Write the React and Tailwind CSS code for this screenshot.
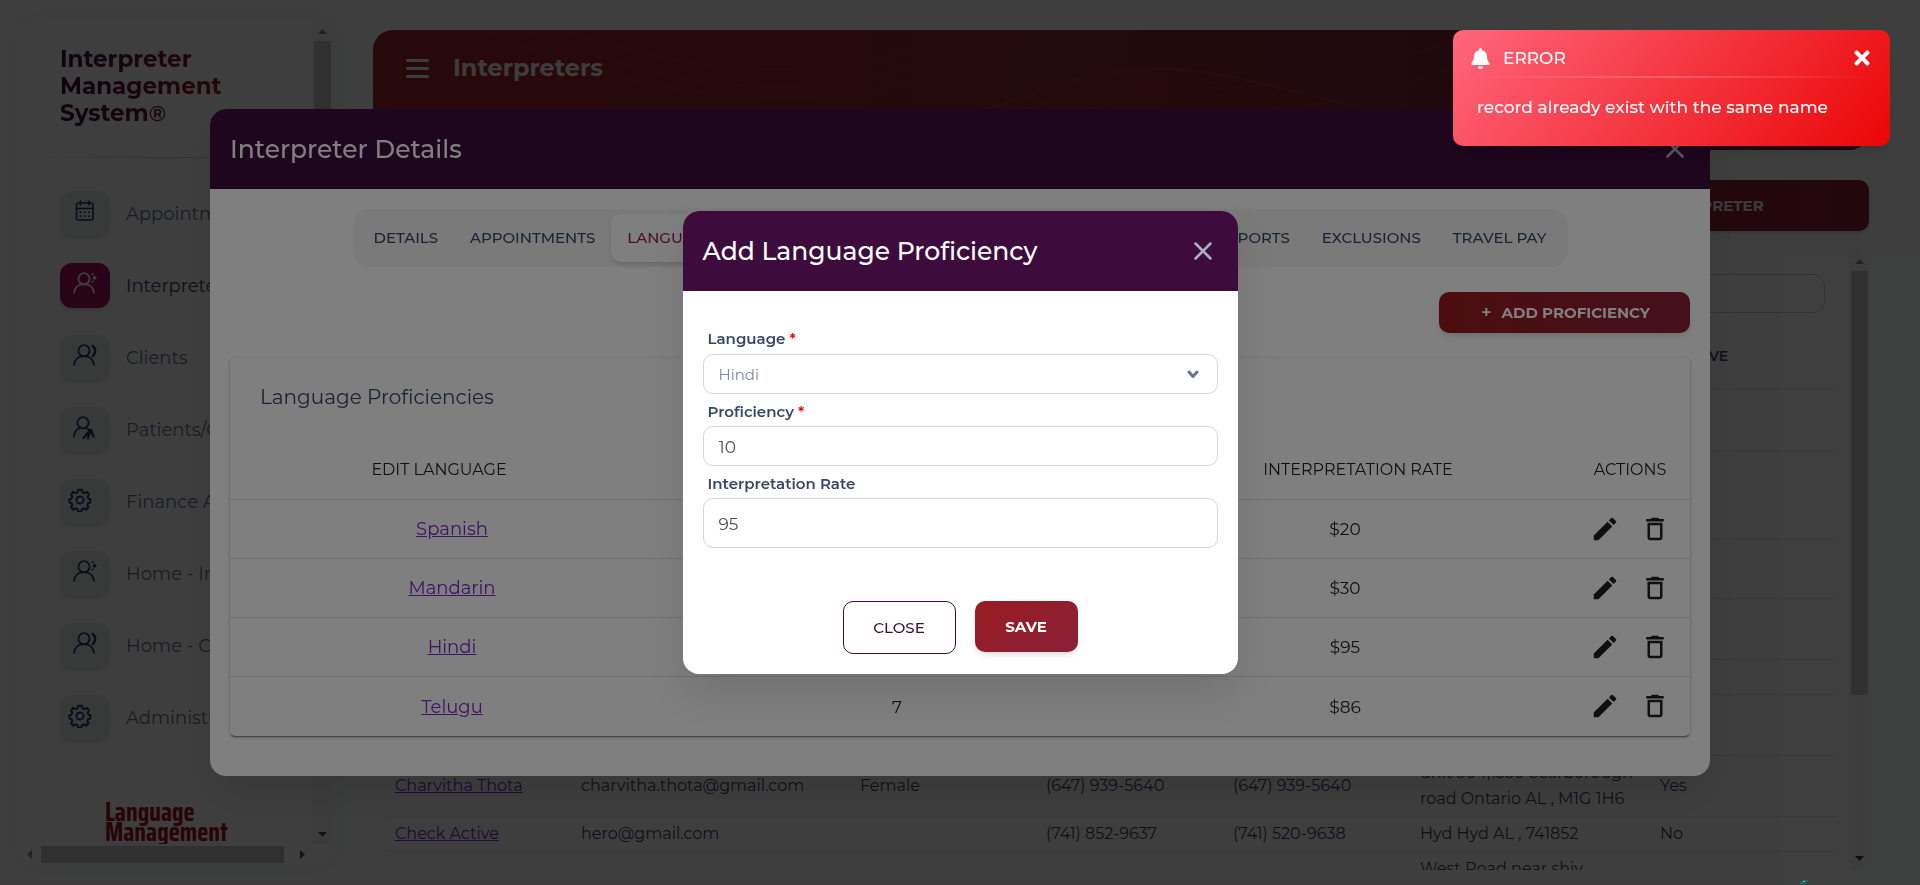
import React from "react";
import { FaBell, FaTimes } from "react-icons/fa";
import { MdEdit, MdDeleteOutline } from "react-icons/md";

function CalendarIcon() {
  return (
    <svg width="20" height="22" viewBox="0 0 20 22" fill="none" stroke="currentColor" strokeWidth="1.6" strokeLinecap="round">
      <rect x="1.5" y="3" width="16.5" height="17" rx="2" />
      <path d="M1.5 8.5H18M5.5 1v4M14 1v4" />
      <path d="M5.5 12.2h.2M9.7 12.2h.2M13.9 12.2h.2M5.5 16.2h.2M9.7 16.2h.2M13.9 16.2h.2" strokeWidth="1.8" />
    </svg>
  );
}

function InterpreterIcon() {
  return (
    <svg width="24" height="22" viewBox="0 0 24 22" fill="none" stroke="currentColor" strokeWidth="1.8" strokeLinecap="round">
      <circle cx="11" cy="6.8" r="5.6" />
      <path d="M1 20.8c.5-5.4 4.6-8.6 10-8.6s9.5 3.2 10 8.6" />
      <circle cx="19.6" cy="2.2" r=".5" fill="currentColor" strokeWidth="1.2" />
      <circle cx="21.6" cy="5.8" r="1.3" fill="currentColor" strokeWidth="1.2" />
      <circle cx="19.6" cy="9.6" r=".5" fill="currentColor" strokeWidth="1.2" />
    </svg>
  );
}

function ClientsIcon() {
  return (
    <svg width="24" height="22" viewBox="0 0 24 22" fill="none" stroke="currentColor" strokeWidth="1.8" strokeLinecap="round">
      <circle cx="11" cy="6.8" r="5.6" />
      <path d="M1 20.8c.5-5.4 4.6-8.6 10-8.6s9.5 3.2 10 8.6" />
      <path d="M20 2c2.8 2.6 2.8 7 0 9.8" strokeWidth="2.6" />
    </svg>
  );
}

function PatientIcon() {
  return (
    <svg width="24" height="24" viewBox="0 0 24 24" fill="none" stroke="currentColor" strokeWidth="1.8" strokeLinecap="round">
      <circle cx="10" cy="6.8" r="5.6" />
      <path d="M1 20.5c.3-4.5 2.8-7.6 6.4-8.3M12.5 12.2c1.3.3 2.4.9 3.3 1.6" />
      <path d="M17.5 13.5l-7 8.5M17 14l-2 8.5M18 14l2.5 6.5" strokeWidth="2.2" />
      <path d="M17.5 13.5l-4 5.5 3-.5z" fill="currentColor" />
    </svg>
  );
}

function GearIcon() {
  return (
    <svg width="24" height="24" viewBox="0 0 24 24" fill="none" stroke="currentColor" strokeWidth="2" strokeLinejoin="round">
      <circle cx="12" cy="12" r="3.6" />
      <path d="M10 1.8h4l.6 2.6 1.9.8 2.3-1.4 2.2 2.7-1.4 2.2.8 1.9 2 .6v3.2l-2.3.8-.8 1.9 1.3 2.1-2.5 2.5-2.2-1.3-1.9.8-.6 2.3h-3.2l-.7-2.3-1.9-.8-2.2 1.3-2.3-2.5 1.3-2.2-.8-1.8-2.2-.8v-3.2l2.2-.6.8-1.9-1.3-2.2 2.2-2.6 2.3 1.3 1.9-.8z" />
    </svg>
  );
}

const NAV = [
  { label: "Appointments", Icon: CalendarIcon },
  { label: "Interpreters", Icon: InterpreterIcon, active: true },
  { label: "Clients", Icon: ClientsIcon },
  { label: "Patients/Consumers", Icon: PatientIcon },
  { label: "Finance Admin", Icon: GearIcon, left: true },
  { label: "Home - Interpreter", Icon: InterpreterIcon },
  { label: "Home - Client", Icon: ClientsIcon },
  { label: "Administration", Icon: GearIcon, left: true },
];

const INTERPRETERS = [
  { height: "h-[61px]" },
  { height: "h-[88px]" },
  { height: "h-[60px]" },
  { height: "h-[61px]" },
  { height: "h-[35px]" },
  { height: "h-[61px]" },
  {
    height: "h-[61px]",
    name: "Charvitha Thota",
    email: "charvitha.thota@gmail.com",
    gender: "Female",
    phone: "(647) 939-5640",
    mobile: "(647) 939-5640",
    address: ["unit 304,1350 Scarborough", "road Ontario AL , M1G 1H6"],
    active: "Yes",
  },
  {
    height: "h-[35px]",
    name: "Check Active",
    email: "hero@gmail.com",
    gender: "",
    phone: "(741) 852-9637",
    mobile: "(741) 520-9638",
    address: ["Hyd Hyd AL , 741852"],
    active: "No",
  },
  { height: "h-[61px]", address: ["West Road near shiv", "mandir"] },
];

const PROFICIENCIES = [
  { language: "Spanish", level: "", rate: "$20" },
  { language: "Mandarin", level: "", rate: "$30" },
  { language: "Hindi", level: "", rate: "$95" },
  { language: "Telugu", level: "7", rate: "$86" },
];

function Arrow({ className, d }) {
  return (
    <svg className={className} width="11" height="11" viewBox="0 0 11 11" fill="currentColor" aria-hidden="true">
      <path d={d} />
    </svg>
  );
}

const UP = "M5.5 3L10 8H1z";
const DOWN = "M1 3h9L5.5 8z";
const LEFT = "M3 5.5L8 1v9z";
const RIGHT = "M8 5.5L3 1v9z";

function CloseIcon() {
  return (
    <svg width="18" height="18" viewBox="0 0 18 18" fill="none" stroke="currentColor" strokeWidth="2.5" strokeLinecap="round" aria-hidden="true">
      <path d="M1.5 1.5l15 15M16.5 1.5l-15 15" />
    </svg>
  );
}

function Sidebar() {
  return (
    <aside className="my-5 ml-5 flex w-[313px] shrink-0 flex-col overflow-hidden rounded-2xl bg-[#fbfbfb] shadow-[0_0_24px_rgba(0,0,0,0.05)]">
      <div className="flex min-h-0 flex-1">
        <div className="flex min-w-0 flex-1 flex-col overflow-hidden px-10 pt-[26px]">
          <h1 className="w-[170px] bg-linear-to-r from-[#3d0c3d] to-[#981b1f] bg-clip-text text-[23px] leading-[27px] font-bold text-transparent">
            Interpreter Management System<span className="text-[22px] font-semibold">®</span>
          </h1>
          <hr className="-mx-10 mt-[30px] h-px shrink-0 border-0 bg-linear-to-r from-transparent via-[#d0d0d0] to-transparent" />
          <nav className="mt-[33px] flex flex-col gap-[27px]">
            {NAV.map(({ label, Icon, active, left }) => (
              <a key={label} href="#" className="flex items-center gap-4 whitespace-nowrap">
                <span
                  className={`flex h-[45px] w-[50px] shrink-0 items-start rounded-xl pt-[9px] shadow-md ${
                    left ? "pl-2" : "justify-center"
                  } ${active ? "bg-[#a70c5c] text-white" : "bg-[#e2ebe8] text-[#343074]"}`}
                >
                  <Icon />
                </span>
                <span className={`pt-[2px] text-[18px] ${active ? "text-[#344767]" : "text-[#67748e]"}`}>{label}</span>
              </a>
            ))}
          </nav>
          <div className="mt-[62px] ml-[45px] font-['Saira_Extra_Condensed','Saira_Condensed','Roboto_Condensed','Barlow_Condensed','Oswald','Liberation_Sans',sans-serif] text-[26px] leading-5 font-bold text-[#a31218]">
            Language
            <br />
            Management
          </div>
        </div>
        <div className="flex w-[21px] shrink-0 flex-col items-center justify-between bg-[#f1f1f1] py-1">
          <div className="flex min-h-0 flex-1 flex-col items-center">
            <Arrow className="mt-[2px] text-[#8a8a8a]" d={UP} />
            <div className="mt-1 h-[560px] w-[17px] bg-[#c1c1c1]" />
          </div>
          <Arrow className="shrink-0 text-[#505050]" d={DOWN} />
        </div>
      </div>
      <div className="flex h-[21px] shrink-0 items-center bg-[#f8f8f8] pr-[21px]">
        <Arrow className="ml-1 text-[#8a8a8a]" d={LEFT} />
        <div className="ml-[6px] h-[17px] w-[243px] bg-[#c1c1c1]" />
        <Arrow className="mr-1 ml-auto text-[#505050]" d={RIGHT} />
      </div>
    </aside>
  );
}

function HeaderWaves() {
  return (
    <svg className="absolute inset-0 h-full w-full" viewBox="0 0 1496 120" preserveAspectRatio="none" fill="none" aria-hidden="true">
      <path d="M0 60L60 120H0z" fill="#b03038" fillOpacity=".35" />
      <path d="M480 120C620 90 680 38 790 39s230 70 420 61v20z" fill="#b02830" fillOpacity=".25" />
      <g stroke="#c86060" strokeOpacity=".15">
        <path d="M150 0c150 60 300 90 480 0" />
        <path d="M190 0c130 45 270 60 400 0" />
        <path d="M110 0c180 80 380 100 560 0" />
        <path d="M480 120C620 90 680 38 790 39s230 70 420 61" strokeWidth="3" />
        <path d="M540 120c100-30 150-66 250-70s200 55 340 60" />
        <path d="M600 120c80-24 110-50 190-52s120 40 220 50" />
        <path d="M800 60C950 60 1050 20 1120 0" />
        <path d="M860 80c140 0 240-50 320-80" />
        <path d="M0 20l100 100M20 0l120 120" />
      </g>
    </svg>
  );
}

function InterpretersPage() {
  return (
    <main className="mt-[30px] mr-[51px] mb-[15px] ml-10 flex min-w-0 flex-1 flex-col">
      <header className="relative flex h-[120px] shrink-0 items-start overflow-hidden rounded-[20px] bg-linear-to-r from-[#a3262c] via-[#8c2832] to-[#762038] px-[33px] pt-5">
        <HeaderWaves />
        <div className="relative flex h-9 items-center gap-6 text-[#eef2f0]">
          <button type="button" aria-label="Menu" className="flex flex-col gap-[5px]">
            <span className="h-[3px] w-[23px] rounded-sm bg-current" />
            <span className="h-[3px] w-[23px] rounded-sm bg-current" />
            <span className="h-[3px] w-[23px] rounded-sm bg-current" />
          </button>
          <h2 className="text-[24px] font-bold">Interpreters</h2>
        </div>
      </header>
      <button
        type="button"
        className="mt-[30px] h-[51px] w-[374px] shrink-0 self-end rounded-[10px] bg-linear-to-r from-[#981b1f] to-[#8a2038] pt-[2px] text-[15px] font-bold text-[#e8eaea] shadow-md"
      >
        + ADD INTERPRETER
      </button>
      <section className="mt-[19px] flex min-h-0 flex-1 overflow-hidden rounded-2xl bg-[#fbfbfb]">
        <div className="min-w-0 flex-1 overflow-hidden pt-6 pr-[14px] pl-3">
          <div className="flex justify-end pr-[10px]">
            <input
              type="search"
              aria-label="Search interpreters"
              className="h-[39px] w-[260px] rounded-xl border border-[#c8ccd0] bg-transparent px-3"
            />
          </div>
          <table className="w-full table-fixed text-left text-[16px] text-[#344767]">
            <colgroup>
              <col className="w-[186px]" />
              <col className="w-[279px]" />
              <col className="w-[186px]" />
              <col className="w-[187px]" />
              <col className="w-[187px]" />
              <col className="w-[240px]" />
              <col />
            </colgroup>
            <thead>
              <tr className="h-[76px] border-b border-[#dde0e3] text-[14px] [&>th]:pt-3 [&>th]:pl-[26px] [&>th]:font-semibold">
                <th>NAME</th>
                <th>EMAIL</th>
                <th>GENDER</th>
                <th>PHONE</th>
                <th>MOBILE</th>
                <th>ADDRESS</th>
                <th>ACTIVE</th>
              </tr>
            </thead>
            <tbody>
              {INTERPRETERS.map((row, i) => (
                <tr key={i} className={`${row.height} border-b border-[#dde0e3] [&>td]:px-[10px] [&>td]:whitespace-nowrap`}>
                  <td>
                    {row.name && (
                      <a href="#" className="text-[#7928ca] underline">
                        {row.name}
                      </a>
                    )}
                  </td>
                  <td>{row.email}</td>
                  <td>{row.gender}</td>
                  <td>{row.phone}</td>
                  <td>{row.mobile}</td>
                  <td className="leading-[26px]">
                    {(row.address || []).map((line) => (
                      <div key={line}>{line}</div>
                    ))}
                  </td>
                  <td>{row.active}</td>
                </tr>
              ))}
            </tbody>
          </table>
        </div>
        <div className="flex w-5 shrink-0 flex-col items-center bg-[#f1f1f1] py-[6px]">
          <Arrow className="text-[#8a8a8a]" d={UP} />
          <div className="mt-1 h-[424px] w-[17px] bg-[#c1c1c1]" />
          <Arrow className="mt-auto text-[#404040]" d={DOWN} />
        </div>
      </section>
    </main>
  );
}

function Tab({ children, active }) {
  return (
    <button
      type="button"
      role="tab"
      aria-selected={!!active}
      className={`h-12 px-4 text-[15px] font-medium ${
        active ? "rounded-[10px] bg-white text-[#a0145c] shadow-md" : "text-[#344767]"
      }`}
    >
      {children}
    </button>
  );
}

function DetailsDialog() {
  return (
    <div
      role="dialog"
      aria-labelledby="details-title"
      className="mx-auto mt-[109px] w-[1500px] max-w-full overflow-hidden rounded-2xl bg-white pb-10 shadow-[0_20px_40px_rgba(0,0,0,0.1)]"
    >
      <div className="flex h-20 items-center justify-between bg-[#3d0c3d] pr-[26px] pl-5 text-white">
        <h2 id="details-title" className="pt-[2px] text-[25px] font-medium">
          Interpreter Details
        </h2>
        <button type="button" aria-label="Close details" className="text-[#a9b2c0]">
          <CloseIcon />
        </button>
      </div>
      <div className="px-5 pt-5">
        <div role="tablist" className="mx-auto flex h-[58px] w-[1215px] max-w-full items-center justify-between rounded-2xl bg-[#f4f4f4] px-[5px]">
          <div className="flex">
            <Tab>DETAILS</Tab>
            <Tab>APPOINTMENTS</Tab>
            <Tab active>LANGUAGES</Tab>
          </div>
          <div className="flex">
            <Tab>REPORTS</Tab>
            <Tab>EXCLUSIONS</Tab>
            <Tab>TRAVEL PAY</Tab>
          </div>
        </div>
        <div className="mt-[25px] flex justify-end">
          <button
            type="button"
            className="flex h-[41px] w-[251px] items-center justify-center gap-[10px] rounded-[10px] bg-linear-to-r from-[#981b1f] to-[#8a2038] pt-[2px] pl-[2px] text-[15px] font-bold text-white shadow-md"
          >
            <span className="text-[18px] font-semibold">+</span>
            <span>ADD PROFICIENCY</span>
          </button>
        </div>
        <section className="mt-[25px] overflow-hidden rounded-[5px] bg-white shadow-[0_2px_1px_-1px_rgba(0,0,0,0.4),0_1px_3px_1px_rgba(0,0,0,0.16)]">
          <h3 className="flex h-[78px] items-center pl-[30px] text-[20px] text-[#344767]">Language Proficiencies</h3>
          <table className="w-full table-fixed text-center text-[17px] text-[#212121]">
            <colgroup>
              <col className="w-[444px]" />
              <col className="w-[446px]" />
              <col />
              <col className="w-[120px]" />
            </colgroup>
            <thead>
              <tr className="h-[63px] border-b border-[#e0e0e0] text-[16px] [&>th]:pt-[5px] [&>th]:font-normal">
                <th className="pr-[26px]">EDIT LANGUAGE</th>
                <th>PROFICIENCY</th>
                <th className="pl-[26px]">INTERPRETATION RATE</th>
                <th>ACTIONS</th>
              </tr>
            </thead>
            <tbody>
              {PROFICIENCIES.map(({ language, level, rate }) => (
                <tr key={language} className="h-[59px] border-b border-[#e0e0e0] last:h-[60px] last:border-0">
                  <td className="pt-[2px]">
                    <a href="#" className="text-[18px] text-[#7928ca] underline">
                      {language}
                    </a>
                  </td>
                  <td className="pt-[2px]">{level}</td>
                  <td className="pt-[2px]">{rate}</td>
                  <td>
                    <div className="flex items-center justify-center gap-5">
                      <button type="button" aria-label={`Edit ${language}`}>
                        <MdEdit size={30} />
                      </button>
                      <button type="button" aria-label={`Delete ${language}`}>
                        <MdDeleteOutline size={30} />
                      </button>
                    </div>
                  </td>
                </tr>
              ))}
            </tbody>
          </table>
        </section>
      </div>
    </div>
  );
}

const FIELD =
  "w-full rounded-[10px] border border-[#d2d6da] bg-white px-[15px] pt-[2px] text-[17px] text-[#495057] outline-none";
const LABEL = "block pl-[5px] text-[15px] leading-5 font-semibold text-[#344767]";

function AddLanguageDialog() {
  return (
    <form
      role="dialog"
      aria-labelledby="add-title"
      onSubmit={(e) => e.preventDefault()}
      className="mx-auto mt-[211px] w-[555px] max-w-full overflow-hidden rounded-2xl bg-white shadow-[0_20px_40px_rgba(0,0,0,0.1)]"
    >
      <div className="flex h-20 items-center justify-between bg-[#3d0c3d] pr-[26px] pl-5 text-white">
        <h2 id="add-title" className="pt-[2px] text-[25px] font-medium">
          Add Language Proficiency
        </h2>
        <button type="button" aria-label="Close" className="text-[#a9b2c0]">
          <CloseIcon />
        </button>
      </div>
      <div className="px-5 pt-[38px] pb-5">
        <label htmlFor="language" className={LABEL}>
          Language <span className="text-[#ff0000]">*</span>
        </label>
        <div className="relative mt-[5px]">
          <select
            id="language"
            defaultValue="Hindi"
            className="h-10 w-full appearance-none rounded-[10px] border border-[#d2d6da] bg-white px-[15px] pt-[2px] text-[15px] text-[#7a88a3] outline-none"
          >
            <option>Hindi</option>
            <option>Spanish</option>
            <option>Mandarin</option>
            <option>Telugu</option>
          </select>
          <svg
            className="pointer-events-none absolute top-4 right-[19px]"
            width="12"
            height="9"
            viewBox="0 0 12 9"
            fill="none"
            stroke="#67748e"
            strokeWidth="3"
            strokeLinecap="round"
            strokeLinejoin="round"
            aria-hidden="true"
          >
            <path d="M2 2l4 4.5L10 2" />
          </svg>
        </div>
        <label htmlFor="proficiency" className={`mt-2 ${LABEL}`}>
          Proficiency <span className="text-[#ff0000]">*</span>
        </label>
        <input id="proficiency" type="text" defaultValue="10" className={`mt-1 h-10 ${FIELD}`} />
        <label htmlFor="rate" className={`mt-2 ${LABEL}`}>
          Interpretation Rate
        </label>
        <input id="rate" type="text" defaultValue="95" className={`mt-1 h-[50px] ${FIELD}`} />
        <div className="mt-[53px] flex items-start justify-center gap-[19px]">
          <button
            type="button"
            className="h-[53px] w-[113px] rounded-[10px] border border-[#3d0c3d] pt-[2px] text-[15px] font-medium text-[#3d0c3d]"
          >
            CLOSE
          </button>
          <button
            type="submit"
            className="h-[51px] w-[103px] rounded-[10px] bg-linear-to-br from-[#981b1f] to-[#8a2038] pt-[2px] text-[15px] font-bold text-white shadow-md"
          >
            SAVE
          </button>
        </div>
      </div>
    </form>
  );
}

function ErrorToast() {
  return (
    <div
      role="alert"
      className="fixed top-[30px] right-[30px] h-[116px] w-[437px] rounded-[10px] bg-[linear-gradient(310deg,#ea0606,#ff667c)] px-[17px] pt-3 text-white shadow-lg"
    >
      <div className="flex h-8 items-center">
        <FaBell size={21} />
        <span className="ml-3 pt-[2px] text-[17px] font-medium">ERROR</span>
        <button type="button" aria-label="Dismiss" className="ml-auto">
          <FaTimes size={22} />
        </button>
      </div>
      <hr className="mt-[2px] h-[2px] border-0 bg-linear-to-r from-transparent via-white/20 to-transparent" />
      <p className="mt-[17px] pl-[7px] text-[17px] leading-6 font-medium">record already exist with the same name</p>
    </div>
  );
}

export default function App() {
  return (
    <div className="h-screen overflow-hidden bg-[#f8f9fa] font-['Montserrat','Inter',sans-serif]">
      <div className="flex h-full">
        <Sidebar />
        <InterpretersPage />
      </div>
      <div className="fixed inset-0 overflow-hidden bg-black/50">
        <DetailsDialog />
      </div>
      <div className="fixed inset-0 overflow-hidden bg-black/50">
        <AddLanguageDialog />
      </div>
      <div className="fixed right-28 bottom-px h-1 w-2 overflow-hidden">
        <svg width="8" height="4" viewBox="0 0 8 4" aria-hidden="true">
          <path d="M0 4V2h2V0h6v2H6v2z" fill="#1c6f6d" />
          <path d="M3 1h2v1H3z" fill="#5ab0aa" />
        </svg>
      </div>
      <ErrorToast />
    </div>
  );
}
